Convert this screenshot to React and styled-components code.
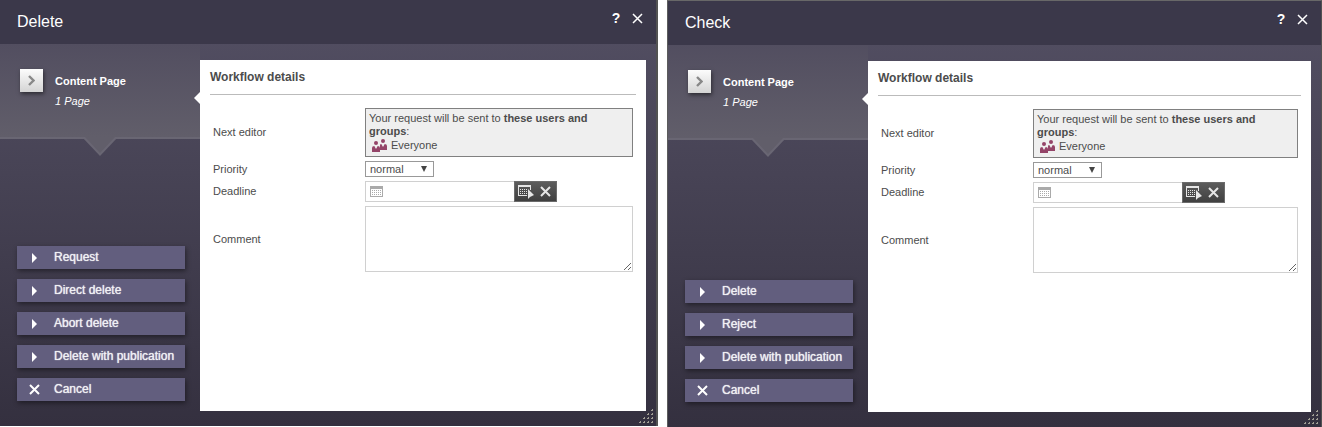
import React, { useId } from "react";
import styled, { createGlobalStyle } from "styled-components";

const GlobalStyle = createGlobalStyle`
  *, *::before, *::after { box-sizing: border-box; }
  body {
    margin: 0;
    background: #fff;
    color: #4c4c4c;
    font: 11px/13px "Liberation Sans", Arial, sans-serif;
  }
  button, input, select, textarea { font: inherit; color: inherit; margin: 0; }
  svg { display: block; }
`;

const Page = styled.div`
  display: grid;
  grid-template-columns: 658fr 655fr;
  gap: 9px;
  align-items: start;
`;

const Dialog = styled.section`
  position: relative;
  color: #fff;
  background: linear-gradient(#545064, #34303f);
  border-style: solid;
  border-color: #686868 #525252 #525252 #5c5c5c;
  border-width: ${(p) => (p.$framed ? "1px 1px 0 1px" : "0 2px 0 0")};
`;

const TitleBar = styled.header`
  display: flex;
  align-items: center;
  height: 44px;
  padding: 0 10px 0 17px;
  background: #3b384a;
`;

const Title = styled.h1`
  flex: 1;
  margin: 0;
  font-size: 16px;
  line-height: 20px;
  font-weight: 400;
`;

const TitleButton = styled.button`
  display: flex;
  align-items: center;
  justify-content: center;
  width: 18px;
  height: 18px;
  margin: 0 0 8px 3px;
  padding: 0;
  border: 0;
  background: none;
  color: #fff;
  font-size: 14px;
  font-weight: 700;
`;

const Body = styled.div`
  display: flex;
  padding: 0 10px 15px 0;
`;

const Sidebar = styled.aside`
  display: flex;
  flex-direction: column;
  flex: 0 0 200px;
`;

const Selection = styled.div`
  position: relative;
  display: flex;
  gap: 12px;
  height: 95px;
  padding: 25px 0 0 20px;
  background: linear-gradient(#524e60, #615e6a);
  border-bottom: 2px solid #696673;
`;

const Pointer = styled.svg`
  position: absolute;
  left: 82px;
  top: 93px;
`;

const NextButton = styled.button`
  display: flex;
  align-items: center;
  justify-content: center;
  width: 23px;
  height: 23px;
  padding: 0;
  border: 0;
  background: linear-gradient(#fcfcfc, #d4d4d4);
  box-shadow: 1px 2px 4px rgba(0, 0, 0, 0.5);
`;

const SelectionText = styled.div`
  padding-top: 2px;
  line-height: 20px;
`;

const Name = styled.strong`
  display: block;
`;

const Actions = styled.nav`
  display: flex;
  flex-direction: column;
  gap: 10px;
  margin-top: auto;
  padding: 0 15px 10px 17px;
`;

const Action = styled.button`
  display: flex;
  align-items: center;
  height: 23px;
  padding: 0;
  border: 0;
  background: #625e7e;
  color: #f0f0f4;
  box-shadow: 1px 2px 5px rgba(0, 0, 0, 0.45);
  font-size: 12px;
  line-height: 14px;
  text-shadow: 0 0 1px #fff;
  white-space: nowrap;
`;

const ActionIcon = styled.span`
  display: flex;
  justify-content: center;
  width: 35px;
  margin-right: 2px;
`;

const ActionLabel = styled.span`
  padding-bottom: 2px;
`;

const Content = styled.main`
  position: relative;
  flex: 1;
  min-width: 0;
  min-height: 351px;
  margin-top: 16px;
  padding: 0 10px;
  background: #fff;
  color: #4c4c4c;
`;

const Notch = styled.svg`
  position: absolute;
  left: -6px;
  top: 32px;
`;

const Heading = styled.h2`
  margin: 0;
  height: 35px;
  border-bottom: 1px solid #bbb;
  font-size: 12px;
  line-height: 34px;
`;

const Form = styled.form`
  display: grid;
  grid-template-columns: 152px minmax(0, 1fr);
  row-gap: 4px;
  align-items: center;
  padding: 13px 3px 0;
`;

const Recipients = styled.div`
  padding: 3px 3px 1px;
  border: 1px solid #808080;
  background: #efefef;
`;

const Group = styled.div`
  display: flex;
  align-items: center;
  gap: 4px;
  height: 17px;
  padding: 0 0 3px 3px;
`;

const Picker = styled.div`
  position: relative;
  width: 69px;
`;

const Select = styled.select`
  display: block;
  appearance: none;
  width: 100%;
  height: 16px;
  padding: 0 4px;
  border: 1px solid #999;
  border-radius: 0;
  background: #fff;
  line-height: 14px;
`;

const Caret = styled.svg`
  position: absolute;
  right: 7px;
  top: 5px;
  pointer-events: none;
`;

const DateField = styled.div`
  display: flex;
  height: 21px;
`;

const DateBox = styled.div`
  display: flex;
  align-items: center;
  width: 149px;
  padding-left: 4px;
  border: 1px solid #d0d0d0;
  border-right: 0;
`;

const DateInput = styled.input`
  flex: 1;
  min-width: 0;
  height: 17px;
  padding: 0 4px;
  border: 0;
  outline: 0;
  background: none;
`;

const DateTools = styled.div`
  display: flex;
  gap: 6px;
  width: 43px;
  padding-left: 3px;
  border: 1px solid #6b6b6b;
  background: linear-gradient(#5c5c5c, #404040);
`;

const DateTool = styled.button`
  display: flex;
  align-items: center;
  justify-content: center;
  padding: 0;
  border: 0;
  background: none;
`;

const Comment = styled.textarea`
  display: block;
  width: 100%;
  height: 66px;
  padding: 3px;
  border: 1px solid #d0d0d0;
  border-radius: 0;
  background: #fff;
  resize: both;
`;

const Grip = styled.svg`
  position: absolute;
  right: 3px;
  bottom: 3px;
`;

const Cross = ({ size = 11, color = "#fff", weight = 2 }) => (
  <svg width={size} height={size} viewBox="0 0 11 11" aria-hidden="true">
    <path d="M1 1L10 10M10 1L1 10" stroke={color} strokeWidth={weight} fill="none" />
  </svg>
);

const Play = () => (
  <svg width="5" height="10" viewBox="0 0 5 10" aria-hidden="true">
    <path d="M0 0L5 5L0 10Z" fill="#fff" />
  </svg>
);

const gridDots = (count, startX, startY, rows) =>
  Array.from({ length: rows }, (_, r) =>
    Array.from({ length: count }, (_, c) => `M${startX + c * 2} ${startY + r * 2}h1v1h-1z`).join("")
  ).join("");

const Calendar = () => (
  <svg width="13" height="11" viewBox="0 0 13 11" shapeRendering="crispEdges" aria-hidden="true">
    <path d="M0 0H13V11H0ZM1 3V10H12V3Z" fill="#aaa" fillRule="evenodd" />
    <path d={gridDots(5, 2, 4, 3)} fill="#aaa" />
  </svg>
);

const CalendarPick = () => (
  <svg width="16" height="14" viewBox="0 0 16 14" shapeRendering="crispEdges" aria-hidden="true">
    <path d="M0 0H13V5H12V2H1V10H9V11H0Z" fill="#e6e6e6" />
    <path d={gridDots(4, 2, 4, 3)} fill="#e6e6e6" />
    <path d="M10 4V14L12 12L16 10Z" fill="#e6e6e6" shapeRendering="auto" />
  </svg>
);

const People = () => (
  <svg width="15" height="13" viewBox="0 0 15 13" aria-hidden="true">
    <g fill="#944468">
      <circle cx="11" cy="2" r="2" />
      <path d="M8 11V6Q8 5 9.3 5L11 8L12.7 5Q15 5 15 7V11Z" />
      <circle cx="4" cy="4" r="2" />
      <path d="M0 13V9Q0 7 2.3 7L4 10L5.7 7Q8 7 8 9V13Z" />
    </g>
  </svg>
);

const gripCells = [0, 1, 2, 3].flatMap((row) =>
  Array.from({ length: row + 1 }, (_, i) => [12 - i * 4, row * 4])
);

function WorkflowDialog({ title, actions, framed }) {
  const id = useId();
  return (
    <Dialog $framed={framed} aria-labelledby={`${id}-title`}>
      <TitleBar>
        <Title id={`${id}-title`}>{title}</Title>
        <TitleButton type="button" aria-label="Help">?</TitleButton>
        <TitleButton type="button" aria-label="Close">
          <Cross weight={1.5} />
        </TitleButton>
      </TitleBar>
      <Body>
        <Sidebar>
          <Selection>
            <NextButton type="button" aria-label="Show pages">
              <svg width="7" height="11" viewBox="0 0 7 11" aria-hidden="true">
                <path d="M1 1L5.5 5.5L1 10" fill="none" stroke="#888" strokeWidth="2.4" />
              </svg>
            </NextButton>
            <SelectionText>
              <Name>Content Page</Name>
              <em>1 Page</em>
            </SelectionText>
            <Pointer width="36" height="19" viewBox="0 0 36 19" aria-hidden="true">
              <path d="M0 0H36L18 19Z" fill="#696673" />
              <path d="M3 0H33L18 16Z" fill="#615e6a" />
            </Pointer>
          </Selection>
          <Actions>
            {actions.map((label) => (
              <Action key={label} type="button">
                <ActionIcon>{label === "Cancel" ? <Cross /> : <Play />}</ActionIcon>
                <ActionLabel>{label}</ActionLabel>
              </Action>
            ))}
          </Actions>
        </Sidebar>
        <Content>
          <Notch width="6" height="12" viewBox="0 0 6 12" aria-hidden="true">
            <path d="M6 0V12L0 6Z" fill="#fff" />
          </Notch>
          <Heading>Workflow details</Heading>
          <Form>
            <span>Next editor</span>
            <Recipients>
              Your request will be sent to <b>these users and groups</b>:
              <Group>
                <People />
                Everyone
              </Group>
            </Recipients>
            <label htmlFor={`${id}-priority`}>Priority</label>
            <Picker>
              <Select id={`${id}-priority`} defaultValue="normal">
                <option value="low">low</option>
                <option value="normal">normal</option>
                <option value="high">high</option>
              </Select>
              <Caret width="6" height="6" viewBox="0 0 6 6" aria-hidden="true">
                <path d="M0 0H6L3 6Z" fill="#444" />
              </Caret>
            </Picker>
            <label htmlFor={`${id}-deadline`}>Deadline</label>
            <DateField>
              <DateBox>
                <Calendar />
                <DateInput id={`${id}-deadline`} type="text" />
              </DateBox>
              <DateTools>
                <DateTool type="button" aria-label="Choose date">
                  <CalendarPick />
                </DateTool>
                <DateTool type="button" aria-label="Clear date">
                  <Cross color="#e6e6e6" />
                </DateTool>
              </DateTools>
            </DateField>
            <label htmlFor={`${id}-comment`}>Comment</label>
            <Comment id={`${id}-comment`} />
          </Form>
        </Content>
      </Body>
      <Grip width="14" height="14" viewBox="0 0 14 14" shapeRendering="crispEdges" aria-hidden="true">
        {gripCells.map(([x, y]) => (
          <path key={`${x}-${y}`} d={`M${x + 1} ${y}h1v2h-2v-1h1z`} fill="#a09d94" />
        ))}
      </Grip>
    </Dialog>
  );
}

export default function App() {
  return (
    <>
      <GlobalStyle />
      <Page>
        <WorkflowDialog
          title="Delete"
          actions={["Request", "Direct delete", "Abort delete", "Delete with publication", "Cancel"]}
        />
        <WorkflowDialog
          title="Check"
          framed
          actions={["Delete", "Reject", "Delete with publication", "Cancel"]}
        />
      </Page>
    </>
  );
}
